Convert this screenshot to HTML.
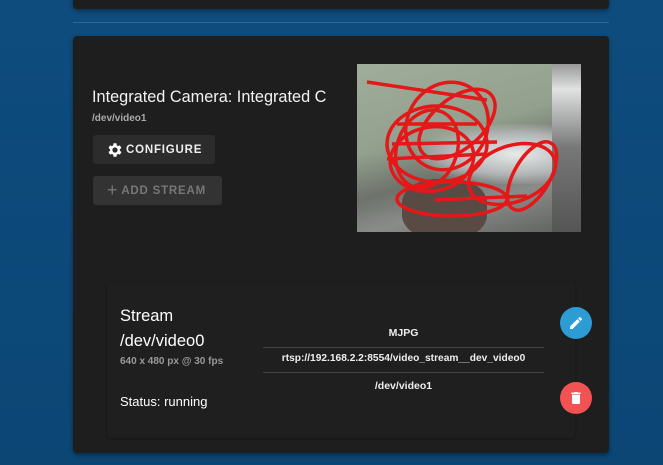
<!DOCTYPE html>
<html><head><style>
*{margin:0;padding:0;box-sizing:border-box}
body{width:663px;height:465px;overflow:hidden;background:linear-gradient(180deg,#0e4c7e,#0b4675);font-family:"Liberation Sans",sans-serif;position:relative;color:#fff}
.card{position:absolute;background:#1e1e1e;border-radius:4px;box-shadow:0 2px 4px rgba(0,0,0,.4)}
.btn{position:absolute;border-radius:3px;font-weight:bold;font-size:11.5px;letter-spacing:.8px;display:flex;align-items:center}
.fab{position:absolute;width:32px;height:32px;border-radius:50%;display:flex;align-items:center;justify-content:center}
.c{position:absolute;text-align:center;font-size:10.5px;font-weight:bold;color:#eee}
</style></head><body>
<div class="card" style="left:73px;top:-10px;width:536px;height:19px"></div>
<div style="position:absolute;left:73px;top:22px;width:536px;height:1px;background:#2f6a99"></div>
<div class="card" style="left:73px;top:36px;width:536px;height:417px"></div>
<div style="position:absolute;left:92px;top:88px;font-size:16.3px;color:#f2f2f2">Integrated Camera: Integrated C</div>
<div style="position:absolute;left:92px;top:113px;font-size:10px;font-weight:bold;color:#aaa">/dev/video1</div>
<div class="btn" style="left:93px;top:135px;width:122px;height:29px;background:#2c2c2c;color:#eee;padding-left:13px">
<svg width="18" height="18" viewBox="0 0 24 24" style="margin-right:2px"><path fill="#fff" d="M19.4 13a7.5 7.5 0 000-2l2.1-1.6-2-3.5-2.5 1a7 7 0 00-1.7-1L15 3h-4l-.4 2.9a7 7 0 00-1.7 1l-2.5-1-2 3.5L6.5 11a7.5 7.5 0 000 2l-2.1 1.6 2 3.5 2.5-1a7 7 0 001.7 1L11 21h4l.4-2.9a7 7 0 001.7-1l2.5 1 2-3.5zM13 15.5a3.5 3.5 0 110-7 3.5 3.5 0 010 7z" transform="translate(-1 0)"/></svg>CONFIGURE</div>
<div class="btn" style="left:93px;top:176px;width:129px;height:29px;background:#333;color:#777;padding-left:14px"><span style="font-size:18px;font-weight:normal;margin-right:3px">+</span>ADD STREAM</div>
<div style="position:absolute;left:357px;top:64px;width:224px;height:168px;overflow:hidden;background:linear-gradient(165deg,#a0ad9b 0%,#93a08e 40%,#6d726b 60%,#8a8c8a 75%,#5c5f5c 100%)">
<div style="position:absolute;left:60px;top:60px;width:164px;height:60px;background:radial-gradient(ellipse at 60% 50%,#e8eaea,#b0b3b3 50%,transparent 75%)"></div>
<div style="position:absolute;left:195px;top:0;width:30px;height:168px;background:linear-gradient(180deg,#999,#e0e2e2 15%,#777 50%,#555)"></div>
<div style="position:absolute;left:45px;top:115px;width:85px;height:60px;background:#5a4a44;border-radius:40%"></div>
<svg width="224" height="168" style="position:absolute;left:0;top:0" fill="none" stroke="#e41818" stroke-width="3.5">
<path d="M10 18 L130 36"/>
<ellipse cx="90" cy="62" rx="40" ry="45" transform="rotate(30 90 62)"/>
<ellipse cx="80" cy="80" rx="50" ry="38"/>
<ellipse cx="75" cy="95" rx="42" ry="32" transform="rotate(-10 75 95)"/>
<ellipse cx="70" cy="85" rx="30" ry="40" transform="rotate(20 70 85)"/>
<ellipse cx="100" cy="60" rx="45" ry="25" transform="rotate(-40 100 60)"/>
<ellipse cx="155" cy="110" rx="45" ry="28" transform="rotate(-20 155 110)"/>
<ellipse cx="95" cy="135" rx="55" ry="17"/>
<ellipse cx="175" cy="112" rx="18" ry="38" transform="rotate(30 175 112)"/>
<path d="M78 136 L170 132"/>
<path d="M35 80 L140 78 M30 95 L130 90 M40 60 L120 60"/>
</svg></div>
<div class="card" style="left:107px;top:282px;width:468px;height:156px;background:#1f1f1f;box-shadow:0 1px 2px rgba(0,0,0,.3)"></div>
<div style="position:absolute;left:120px;top:307px;font-size:16.5px">Stream</div>
<div style="position:absolute;left:120px;top:332px;font-size:16.5px">/dev/video0</div>
<div style="position:absolute;left:120px;top:356px;font-size:10px;font-weight:bold;color:#999">640 x 480 px @ 30 fps</div>
<div style="position:absolute;left:120px;top:394px;font-size:13px">Status: running</div>
<div class="c" style="left:263px;top:327px;width:281px">MJPG</div>
<div style="position:absolute;left:263px;top:347px;width:281px;height:1px;background:#444"></div>
<div class="c" style="left:263px;top:353px;width:281px;font-size:10.2px">rtsp://192.168.2.2:8554/video_stream__dev_video0</div>
<div style="position:absolute;left:263px;top:372px;width:281px;height:1px;background:#444"></div>
<div class="c" style="left:263px;top:380px;width:281px">/dev/video1</div>
<div class="fab" style="left:560px;top:307px;background:#2d9bd4"><svg width="16" height="16" viewBox="0 0 24 24"><path fill="#fff" d="M3 17.25V21h3.75L17.8 9.94l-3.75-3.75zM20.7 7.04a1 1 0 000-1.41l-2.34-2.34a1 1 0 00-1.41 0l-1.83 1.83 3.75 3.75z"/></svg></div>
<div class="fab" style="left:560px;top:382px;background:#f25252"><svg width="16" height="16" viewBox="0 0 24 24"><path fill="#fff" d="M6 19a2 2 0 002 2h8a2 2 0 002-2V7H6zM19 4h-3.5l-1-1h-5l-1 1H5v2h14z"/></svg></div>
</body></html>
